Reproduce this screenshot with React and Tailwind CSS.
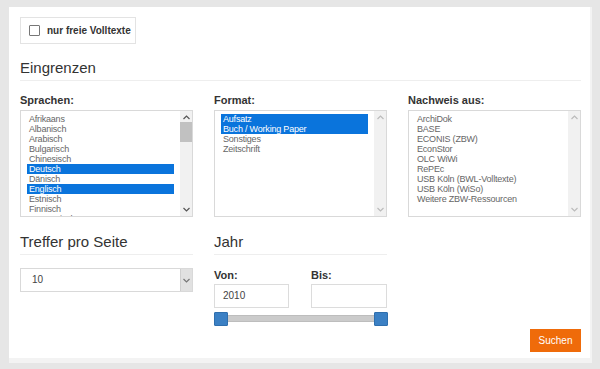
import React from "react";

const sprachen = [
  { name: "Afrikaans" },
  { name: "Albanisch" },
  { name: "Arabisch" },
  { name: "Bulgarisch" },
  { name: "Chinesisch" },
  { name: "Deutsch", selected: true },
  { name: "Dänisch" },
  { name: "Englisch", selected: true },
  { name: "Estnisch" },
  { name: "Finnisch" },
  { name: "Französisch" },
];

const formate = [
  { name: "Aufsatz", selected: true },
  { name: "Buch / Working Paper", selected: true },
  { name: "Sonstiges" },
  { name: "Zeitschrift" },
];

const quellen = [
  { name: "ArchiDok" },
  { name: "BASE" },
  { name: "ECONIS (ZBW)" },
  { name: "EconStor" },
  { name: "OLC WiWi" },
  { name: "RePEc" },
  { name: "USB Köln (BWL-Volltexte)" },
  { name: "USB Köln (WiSo)" },
  { name: "Weitere ZBW-Ressourcen" },
];

function Chevron({ up, className }) {
  return (
    <svg width="7" height="5" viewBox="0 0 7 5" className={className}>
      <path
        d={up ? "M0.5 4 L3.5 1 L6.5 4" : "M0.5 1 L3.5 4 L6.5 1"}
        fill="none"
        stroke="currentColor"
        strokeWidth="1.2"
      />
    </svg>
  );
}

function ListBox({ items, thumb }) {
  return (
    <div className="flex h-[107px] border border-[#d9d9d9] bg-white overflow-hidden">
      <div className="flex-1 pt-[3px] pl-[6px] pr-[6px] overflow-hidden">
        {items.map((item) => (
          <div
            key={item.name}
            className={
              item.selected
                ? "h-[10px] leading-[10px] pl-[2px] text-[9px] tracking-[-0.2px] text-white bg-[#0a74dc] whitespace-nowrap"
                : "h-[10px] leading-[10px] pl-[2px] text-[9px] tracking-[-0.2px] text-[#666] whitespace-nowrap"
            }
          >
            {item.name}
          </div>
        ))}
      </div>
      <div className="w-[12px] bg-[#f1f1f1] flex flex-col items-center justify-between py-[4px]">
        <Chevron up className={thumb ? "text-[#555]" : "text-[#bbb]"} />
        <div className="flex-1 w-full pt-[2px]">
          {thumb && <div className="h-[20px] w-full bg-[#c1c1c1]" />}
        </div>
        <Chevron className={thumb ? "text-[#555]" : "text-[#bbb]"} />
      </div>
    </div>
  );
}

function Heading({ children }) {
  return (
    <div className="border-b border-[#eeeeee] pb-[3px] text-[15px] leading-[18px] text-[#333]">
      {children}
    </div>
  );
}

function Label({ children }) {
  return (
    <div className="text-[11px] leading-[12px] font-bold text-[#333]">{children}</div>
  );
}

export default function App() {
  return (
    <div className="w-[600px] h-[369px] bg-[#e6e6e6] pl-[9px] pt-[7px] pr-[8px] pb-[6px] font-['Liberation_Sans',Arial,sans-serif]">
      <div className="h-full flex flex-col bg-white border-r-[2px] border-b-[5px] border-[#f3f3f3] pl-[11px] pt-[10px]">
        <div className="w-[116px] h-[27px] border border-[#e3e3e3] flex items-center pl-[8px] gap-[7px]">
          <div className="w-[11px] h-[11px] border border-[#777] rounded-[1px]" />
          <span className="text-[10px] font-bold text-[#333] whitespace-nowrap">nur freie Volltexte</span>
        </div>

        <div className="w-[561px] mt-[15px]">
          <Heading>Eingrenzen</Heading>
        </div>

        <div className="grid grid-cols-[173px_173px_173px] gap-x-[21px] mt-[13px]">
          <div>
            <Label>Sprachen:</Label>
            <div className="mt-[4px]">
              <ListBox items={sprachen} thumb />
            </div>
          </div>
          <div>
            <Label>Format:</Label>
            <div className="mt-[4px]">
              <ListBox items={formate} />
            </div>
          </div>
          <div>
            <Label>Nachweis aus:</Label>
            <div className="mt-[4px]">
              <ListBox items={quellen} />
            </div>
          </div>
        </div>

        <div className="flex-1 grid grid-cols-[173px_173px_173px] gap-x-[21px] mt-[16px] pb-[6px]">
          <div>
            <Heading>Treffer pro Seite</Heading>
            <div className="mt-[13px] h-[24px] border border-[#d9d9d9] flex">
              <div className="flex-1 pl-[11px] text-[10px] leading-[22px] text-[#444]">10</div>
              <div className="w-[12px] bg-[#e1e1e1] border-l border-[#cfcfcf] flex items-center justify-center text-[#777]">
                <Chevron />
              </div>
            </div>
          </div>
          <div>
            <Heading>Jahr</Heading>
            <div className="flex gap-[22px] mt-[14px]">
              <div className="w-[75px]">
                <Label>Von:</Label>
                <div className="mt-[3px] h-[24px] border border-[#dcdcdc] pl-[8px] text-[10px] leading-[22px] text-[#444]">
                  2010
                </div>
              </div>
              <div className="w-[76px]">
                <Label>Bis:</Label>
                <div className="mt-[3px] h-[24px] border border-[#dcdcdc]" />
              </div>
            </div>
            <div className="relative mt-[4px] h-[14px] w-[174px]">
              <div className="absolute left-[6px] right-[6px] top-[3px] h-[7px] bg-[#cbcbcb] border border-[#bdbdbd]" />
              <div className="absolute left-0 top-0 w-[14px] h-[14px] bg-[#3b80c4] border border-[#2f6fae] rounded-[1px]" />
              <div className="absolute right-0 top-0 w-[14px] h-[14px] bg-[#3b80c4] border border-[#2f6fae] rounded-[1px]" />
            </div>
          </div>
          <div className="flex flex-col justify-end items-end">
            <button className="w-[51px] h-[23px] bg-[#ef6b0a] text-white text-[10px] leading-[23px]">
              Suchen
            </button>
          </div>
        </div>
      </div>
    </div>
  );
}
